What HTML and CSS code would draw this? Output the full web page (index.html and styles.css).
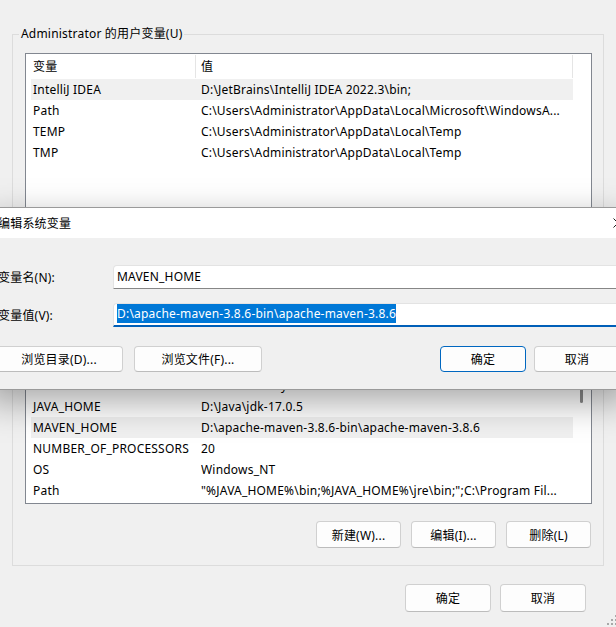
FILE: index.html
```html
<!DOCTYPE html>
<html lang="zh-CN">
<head>
    <meta charset="utf-8">
    <meta name="viewport" content="width=device-width, initial-scale=1.0">
    <title>环境变量</title>
    <link rel="stylesheet" href="styles.css">
</head>
<body>
    <div class="env-window">
        <fieldset class="group">
            <legend>Administrator 的用户变量(U)</legend>
            <div class="list-view user-list">
                <div class="list-head">
                    <div class="head-name">变量</div>
                    <div class="head-value">值</div>
                </div>
                <div class="row selected">
                    <div class="name">IntelliJ IDEA</div>
                    <div class="value">D:\JetBrains\IntelliJ IDEA 2022.3\bin;</div>
                </div>
                <div class="row">
                    <div class="name">Path</div>
                    <div class="value">C:\Users\Administrator\AppData\Local\Microsoft\WindowsA...</div>
                </div>
                <div class="row">
                    <div class="name">TEMP</div>
                    <div class="value">C:\Users\Administrator\AppData\Local\Temp</div>
                </div>
                <div class="row">
                    <div class="name">TMP</div>
                    <div class="value">C:\Users\Administrator\AppData\Local\Temp</div>
                </div>
            </div>
            <div class="group-buttons">
                <button>新建(N)...</button>
                <button>编辑(E)...</button>
                <button>删除(D)</button>
            </div>
        </fieldset>

        <fieldset class="group system-group">
            <legend>系统变量(S)</legend>
            <div class="list-view system-list">
                <div class="list-head">
                    <div class="head-name">变量</div>
                    <div class="head-value">值</div>
                </div>
                <div class="row">
                    <div class="name">ComSpec</div>
                    <div class="value">C:\Windows\system32\cmd.exe</div>
                </div>
                <div class="row">
                    <div class="name">DriverData</div>
                    <div class="value">C:\Windows\System32\Drivers\DriverData</div>
                </div>
                <div class="row">
                    <div class="name">JAVA_HOME</div>
                    <div class="value">D:\Java\jdk-17.0.5</div>
                </div>
                <div class="row selected">
                    <div class="name">MAVEN_HOME</div>
                    <div class="value">D:\apache-maven-3.8.6-bin\apache-maven-3.8.6</div>
                </div>
                <div class="row">
                    <div class="name">NUMBER_OF_PROCESSORS</div>
                    <div class="value">20</div>
                </div>
                <div class="row">
                    <div class="name">OS</div>
                    <div class="value">Windows_NT</div>
                </div>
                <div class="row">
                    <div class="name">Path</div>
                    <div class="value">"%JAVA_HOME%\bin;%JAVA_HOME%\jre\bin;";C:\Program Fil...</div>
                </div>
                <div class="scroll-thumb"></div>
            </div>
            <div class="group-buttons">
                <button>新建(W)...</button>
                <button>编辑(I)...</button>
                <button>删除(L)</button>
            </div>
        </fieldset>

        <div class="window-buttons">
            <button>确定</button>
            <button>取消</button>
        </div>

        <svg class="grip" width="14" height="14" viewBox="0 0 14 14">
            <rect x="13" y="2" width="2" height="2" fill="#a8a8a8"/>
            <rect x="9" y="6" width="2" height="2" fill="#a8a8a8"/>
            <rect x="13" y="6" width="2" height="2" fill="#a8a8a8"/>
            <rect x="5" y="10" width="2" height="2" fill="#a8a8a8"/>
            <rect x="9" y="10" width="2" height="2" fill="#a8a8a8"/>
            <rect x="13" y="10" width="2" height="2" fill="#a8a8a8"/>
        </svg>
    </div>

    <div class="edit-dialog">
        <div class="title-bar">
            <span>编辑系统变量</span>
            <svg class="close-x" width="10" height="10" viewBox="0 0 10 10">
                <path d="M0.5 0.5L9.5 9.5M9.5 0.5L0.5 9.5" stroke="#1a1a1a" stroke-width="1" fill="none"/>
            </svg>
        </div>
        <div class="dialog-body">
            <div class="field">
                <label>变量名(N):</label>
                <div class="text-box">MAVEN_HOME</div>
            </div>
            <div class="field">
                <label>变量值(V):</label>
                <div class="text-box focused"><span class="selection">D:\apache-maven-3.8.6-bin\apache-maven-3.8.6</span></div>
            </div>
            <div class="dialog-buttons">
                <button class="wide">浏览目录(D)...</button>
                <button class="wide">浏览文件(F)...</button>
                <button class="default">确定</button>
                <button>取消</button>
            </div>
        </div>
    </div>
</body>
</html>
```

FILE: styles.css
```css
* {
    box-sizing: border-box;
}

body {
    margin: 0;
    width: 616px;
    height: 627px;
    overflow: hidden;
    position: relative;
    background: #f0f0f0;
    color: #000;
    font-family: "Segoe UI", "Noto Sans", "Noto Sans CJK SC", sans-serif;
    font-size: 12px;
    letter-spacing: 0.2px;
}

button {
    font: inherit;
    letter-spacing: inherit;
    color: #000;
    background: #fdfdfd;
    border: 1px solid #d0d0d0;
    border-bottom-color: #bcbcbc;
    border-radius: 4px;
    padding: 0;
    width: 85px;
    height: 27px;
}

/* main window */
.env-window {
    position: relative;
    height: 627px;
    padding: 26px 12px 0 12px;
}

.group {
    margin: 0;
    padding: 11px 11px 17px 12px;
    border: 1px solid #dcdcdc;
    min-width: 0;
}

.group legend {
    margin-left: -6px;
    padding: 0 2px;
    line-height: 16px;
}

.system-group {
    margin-top: 9px;
}

.list-view {
    position: relative;
    background: #fff;
    border: 1px solid #828790;
    padding: 0 18px 2px 5px;
    overflow: hidden;
}

.user-list {
    height: 177px;
}

.list-head {
    display: flex;
    height: 25px;
}

.head-name {
    width: 165px;
    padding-left: 2px;
    border-right: 1px solid #e5e5e5;
    margin: 1px 0;
    line-height: 23px;
}

.head-value {
    flex: 1;
    padding-left: 5px;
    border-right: 1px solid #e5e5e5;
    margin: 1px 0;
    line-height: 23px;
}

.row {
    display: flex;
    height: 21px;
    line-height: 21px;
    white-space: nowrap;
}

.row.selected {
    background: #f0f0f0;
}

.row .name {
    width: 170px;
    padding-left: 2px;
    overflow: hidden;
}

.row .value {
    flex: 1;
    overflow: hidden;
}

.scroll-thumb {
    position: absolute;
    right: 8px;
    top: 14px;
    width: 3px;
    height: 60px;
    border-radius: 2px;
    background: #8a8a8a;
}

.group-buttons {
    display: flex;
    justify-content: flex-end;
    gap: 10px;
    margin-top: 17px;
    padding-right: 1px;
}

.window-buttons {
    display: flex;
    justify-content: flex-end;
    gap: 9px;
    margin-top: 18px;
    padding-right: 18px;
}

.window-buttons button {
    width: 86px;
    height: 28px;
}

.grip {
    position: absolute;
    right: 0;
    bottom: 0;
}

/* overlaid edit dialog */
.edit-dialog {
    position: absolute;
    left: -15px;
    top: 207px;
    width: 645px;
    border: 1px solid #9a9a9a;
    background: #f0f0f0;
    box-shadow: 0 12px 34px rgba(0, 0, 0, 0.35);
}

.title-bar {
    display: flex;
    align-items: center;
    justify-content: space-between;
    height: 30px;
    background: #fff;
    padding-left: 12px;
}

.close-x {
    margin-right: 6px;
}

.dialog-body {
    padding: 27px 9px 17px 9px;
}

.field {
    display: flex;
    align-items: center;
    margin-bottom: 14px;
}

.field label {
    width: 118px;
    padding-left: 3px;
}

.text-box {
    flex: 1;
    height: 24px;
    background: #fff;
    border: 1px solid #e3e3e3;
    border-bottom-color: #868686;
    border-radius: 4px 4px 0 0;
    padding-left: 3px;
    line-height: 22px;
    white-space: nowrap;
    overflow: hidden;
}

.text-box.focused {
    border-bottom: 2px solid #005fb8;
    line-height: 19px;
}

.selection {
    display: inline-block;
    background: #0078d7;
    color: #fff;
    line-height: 19px;
}

.dialog-buttons {
    display: flex;
    gap: 11px;
    margin-top: 19px;
}

.dialog-buttons button {
    width: 86px;
    height: 26px;
}

.dialog-buttons .wide {
    width: 128px;
}

.dialog-buttons .default {
    margin-left: auto;
    margin-right: -3px;
    border-color: #0067c0;
}
```
